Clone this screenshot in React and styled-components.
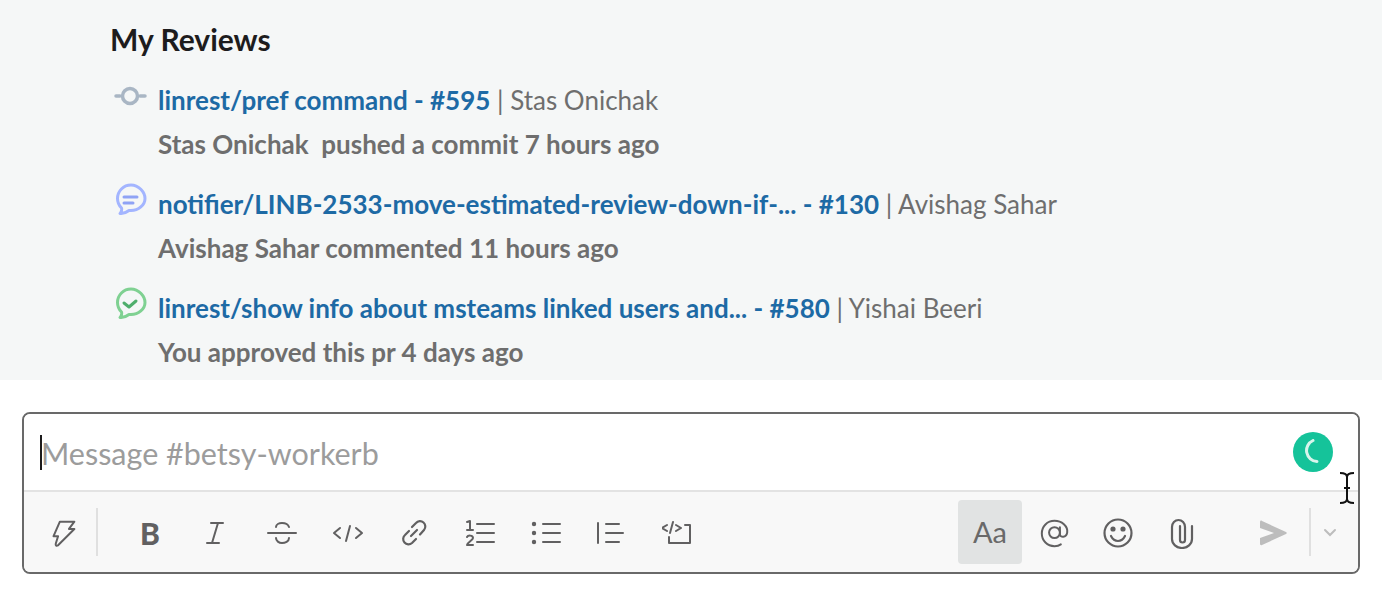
import React from "react";
import styled, { createGlobalStyle } from "styled-components";

const Global = createGlobalStyle`
  html, body { margin: 0; padding: 0; background: #fff; }
  body { font-family: Lato, "Open Sans", sans-serif; width: 1382px; height: 592px; overflow: hidden; }
`;
const Page = styled.div`position: relative; width: 1382px; height: 592px; display: flex; flex-direction: column;`;
const Feed = styled.section`height: 380px; box-sizing: border-box; background: #f5f7f7; padding: 21px 0 0 111px;`;
const Heading = styled.h2`margin: 0 0 27px -1px; font-size: 30px; line-height: 36px; font-weight: 700; color: #1d1c1d;`;
const Review = styled.article`display: grid; grid-template-columns: 47px 1fr; height: 104px;`;
const ReviewIcon = styled.div`margin-top: -8px; padding-left: 2px; height: 40px;`;
const ReviewBody = styled.div`display: flex; flex-direction: column; gap: 12px;`;
const TitleLine = styled.div`font-size: 26px; line-height: 32px; color: #6e6e6e; white-space: nowrap;`;
const Link = styled.span`color: #1d6aa5; font-weight: 700;`;
const Meta = styled.div`font-size: 26px; line-height: 32px; color: #6e6e6e; font-weight: 700; white-space: pre;`;
const Composer = styled.div`margin: 32px 22px 0; height: 162px; box-sizing: border-box; border: 2px solid #696969; border-radius: 8px; display: flex; flex-direction: column; overflow: hidden;`;
const InputRow = styled.div`height: 78px; box-sizing: border-box; border-bottom: 2px solid #e3e3e3; display: flex; align-items: center; padding: 0 25px 0 16px; background: #fff;`;
const Caret = styled.span`width: 2px; height: 35px; background: #1d1c1d;`;
const Placeholder = styled.span`flex: 1; font-size: 30.500px; line-height: 36px; color: #9c9c9c; margin: 2px 0 0 -1px;`;
const Assist = styled.div`width: 40px; height: 40px; border-radius: 50%; background: #15c39a; display: flex; align-items: center; justify-content: center; margin-top: -1px;`;
const Toolbar = styled.div`flex: 1; background: #f8f8f8; display: flex; align-items: center; padding-right: 9px;`;
const ToolSlot = styled.div`width: ${p => p.$w || 66}px; height: 64px; flex: none; display: flex; align-items: center; justify-content: center; padding-top: ${p => p.$active ? 0 : 2}px; box-sizing: border-box; color: #616061; background: ${p => p.$active ? "#e1e3e3" : "transparent"}; border-radius: 4px; margin-left: ${p => p.$ml || 0}px;`;
const AaGlyph = styled.span`font-size: 29px; line-height: 36px; font-weight: 400; color: #696969;`;
const BoldGlyph = styled.span`font-size: 30px; line-height: 36px; font-weight: 900; color: #616061;`;
const Rule = styled.div`width: 2px; height: 48px; background: #e0e0e0; flex: none; margin-left: ${p => p.$ml || 0}px;`;
const Spacer = styled.div`flex: 1;`;
const Pointer = styled.svg`position: absolute; left: 1338px; top: 472px;`;

const S = ({ children, w = 32, h = 32, vb = "0 0 32 32", sw = 2.2 }) => (
  <svg width={w} height={h} viewBox={vb} fill="none" stroke="currentColor" strokeWidth={sw} strokeLinecap="round" strokeLinejoin="round">{children}</svg>
);

const bubble = "M18 5C10.500 5 4.500 11 4.500 18.500c0 4 1.500 7 4 9.500.8 1.500-.5 4.500-1.500 5.500 3.500.5 7-1.500 9-3h2c7.500 0 14-5.500 14-12S25.500 5 18 5Z";

const Commit = () => (
  <svg width="36" height="36" viewBox="0 0 36 36" fill="none" stroke="#a9b6c4" strokeWidth="3.500" strokeLinecap="round">
    <circle cx="17" cy="20" r="7.500" /><path d="M3 20h4M27 20h5" />
  </svg>
);
const Comment = () => (
  <svg width="36" height="36" viewBox="0 0 36 36" fill="none" stroke="#a3b5ff" strokeWidth="3" strokeLinecap="round" strokeLinejoin="round">
    <path d={bubble} />
    <path d="M11 17h13M11 23h9" stroke="#8fa3f5" />
  </svg>
);
const Approved = () => (
  <svg width="36" height="36" viewBox="0 0 36 36" fill="none" stroke="#7fd192" strokeWidth="3" strokeLinecap="round" strokeLinejoin="round">
    <path d={bubble} />
    <path d="M11 19l5 4 7-6" stroke="#4fae6c" />
  </svg>
);

const reviews = [
  { icon: <Commit />, link: "linrest/pref command - #595", who: "Stas Onichak", meta: "Stas Onichak  pushed a commit 7 hours ago" },
  { icon: <Comment />, link: "notifier/LINB-2533-move-estimated-review-down-if-... - #130", who: "Avishag Sahar", meta: "Avishag Sahar commented 11 hours ago" },
  { icon: <Approved />, link: "linrest/show info about msteams linked users and... - #580", who: "Yishai Beeri", meta: "You approved this pr 4 days ago" },
];

export default function App() {
  return (
    <Page>
      <Global />
      <Feed>
        <Heading>My Reviews</Heading>
        {reviews.map(r => (
          <Review key={r.link}>
            <ReviewIcon>{r.icon}</ReviewIcon>
            <ReviewBody>
              <TitleLine><Link>{r.link}</Link> | {r.who}</TitleLine>
              <Meta>{r.meta}</Meta>
            </ReviewBody>
          </Review>
        ))}
      </Feed>
      <Composer>
        <InputRow>
          <Caret />
          <Placeholder>Message #betsy-workerb</Placeholder>
          <Assist>
            <svg width="26" height="26" viewBox="0 0 26 26" fill="none" stroke="#d7f5ec" strokeWidth="3" strokeLinecap="round"><path d="M13 1.500A11 11 0 0 0 17 22.500" /></svg>
          </Assist>
        </InputRow>
        <Toolbar>
          <ToolSlot $w={66} $ml={6}><S w={29} h={29}><path d="M12 3h16l-6 8h6L10 29c-2 1-3 0-2.500-2L10 19H5z" /></S></ToolSlot>
          <Rule />
          <ToolSlot $ml={19}><BoldGlyph>B</BoldGlyph></ToolSlot>
          <ToolSlot><S vb="1 0 32 32" sw={2}><path d="M12 6h12M8 26h12M19 6l-6 20" /></S></ToolSlot>
          <ToolSlot><S sw={2}><path d="M2 16h28M23 10c-1-3-4-4-7-4s-6 1.500-6 4M10 21c0 3 3 5 6 5s7-1.500 7-5" /></S></ToolSlot>
          <ToolSlot><S sw={2}><path d="M8 11l-6 5 6 5M24 11l6 5-6 5M18 9l-4 15" /></S></ToolSlot>
          <ToolSlot><S sw={2.200}><path d="M13 19l6-6M11 14l-4 4a5 5 0 0 0 7 8l4-4M14 10l4-4a5 5 0 0 1 8 7l-4 4.500" /></S></ToolSlot>
          <ToolSlot><S sw={2}><path d="M13 7h17M13 16h17M13 25h17M3 5l3-1v9M3 13h6M3 20c1-2 6-2 6 1 0 2-5 4-6 7h6" /></S></ToolSlot>
          <ToolSlot><S sw={2}><path d="M13 7h17M13 16h17M13 25h17" /><circle cx="4" cy="7" r="1.200" fill="currentColor" /><circle cx="4" cy="16" r="1.200" fill="currentColor" /><circle cx="4" cy="25" r="1.200" fill="currentColor" /></S></ToolSlot>
          <ToolSlot><S sw={2}><path d="M2 6v20M10 7h13M10 16h17M10 25h13" /></S></ToolSlot>
          <ToolSlot><S vb="2 0 32 32" sw={2}><path d="M7 8l-5 3 5 3M16 8l5 3-5 3M13 5l-3 11M25 8h5v18H9v-6" /></S></ToolSlot>
          <Spacer />
          <ToolSlot $active $w={64}><AaGlyph>Aa</AaGlyph></ToolSlot>
          <ToolSlot $w={64}><S w={29} h={29} sw={2.200}><circle cx="16" cy="15" r="6" /><path d="M22 9v8c0 3.500 7 4 8-2 1-7-6-13-14-13S2 8 2 16s6 14 14 14c3 0 5-.5 7-2" /></S></ToolSlot>
          <ToolSlot $w={64}><S sw={2.200}><circle cx="16" cy="16" r="13.500" /><path d="M9 19c2 4 5 5 7 5s5-1 7-5" /><circle cx="11" cy="12" r="1.500" fill="currentColor" /><circle cx="21" cy="12" r="1.500" fill="currentColor" /></S></ToolSlot>
          <ToolSlot $w={64}><S sw={2.200}><path d="M26 9v13a10 9 0 0 1-20 0V10a6.500 7 0 0 1 13 0v13a2.500 2.500 0 0 1-5 0V9" /></S></ToolSlot>
          <ToolSlot $ml={28} $w={62}><svg width="28" height="26" viewBox="0 0 28 26"><path d="M1 2c0-1 1-2 2-1l24 11c1 .5 1 1.500 0 2L3 25c-1 .5-2 0-2-1v-6l14-5L1 8z" fill="#bdbdbd" /></svg></ToolSlot>
          <Rule $ml={5} />
          <ToolSlot $w={38}><svg width="14" height="10" viewBox="0 0 14 10" fill="none" stroke="#bdbdbd" strokeWidth="2" strokeLinecap="round"><path d="M2 2l5 5 5-5" /></svg></ToolSlot>
        </Toolbar>
      </Composer>
      <Pointer width="18" height="32" viewBox="0 0 18 32" fill="none" stroke="#111" strokeWidth="2">
        <path d="M2 1c4 0 7 1 7 4v22c0 3-3 4-7 4M16 1c-4 0-7 1-7 4v22c0 3 3 4 7 4M6 16h6" />
      </Pointer>
    </Page>
  );
}
